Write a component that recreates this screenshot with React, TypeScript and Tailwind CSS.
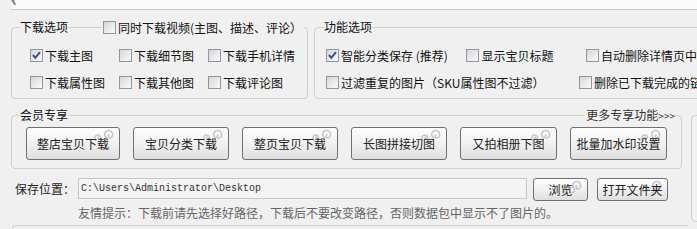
import React from "react";

const FONT = '"Noto Sans CJK SC", "Liberation Sans", sans-serif';

function CheckBox({ checked = false }: { checked?: boolean }) {
  return (
    <span className="relative inline-block w-[13px] h-[13px] shrink-0 border border-[#8f97a3] bg-gradient-to-br from-[#d6d6d6] to-[#fbfbfb]">
      {checked && (
        <svg className="absolute left-0 top-0" width="11" height="11" viewBox="0 0 11 11">
          <path d="M2 5 L4.3 7.8 L9 2.2" stroke="#3d4b8c" strokeWidth="2" fill="none" />
        </svg>
      )}
    </span>
  );
}

function Check({ label, checked = false, className = "" }: { label: string; checked?: boolean; className?: string }) {
  return (
    <div className={"flex items-center gap-[2px] h-[13px] whitespace-nowrap " + className}>
      <CheckBox checked={checked} />
      <span className="text-[12px] leading-[14px] text-[#111]">{label}</span>
    </div>
  );
}

function Swirl() {
  return (
    <svg className="absolute top-[1px] right-[2px]" width="24" height="14" viewBox="0 0 24 14">
      <path d="M3 12 C1 10 1.5 6 5 6 C8 6 8 10 6 10 C4.5 10 4.5 8 6 8" stroke="#c6c6c6" strokeWidth="1.5" fill="none" />
      <path d="M10 13 C13.5 13 14.5 9.5 12.5 7.5 C10.5 5.5 12 1 16 1.5 C20.5 2 21 9 16.5 9 C14.5 9 14.5 6 16.5 6" stroke="#c6c6c6" strokeWidth="1.5" fill="none" />
    </svg>
  );
}

function XButton({ label, className = "" }: { label: string; className?: string }) {
  return (
    <div
      className={
        "relative flex items-center justify-center shrink-0 border border-[#707070] rounded-[3px] bg-gradient-to-b from-[#fdfdfd] via-[#f1f1f1] to-[#dedede] text-[12px] text-[#222] whitespace-nowrap " +
        className
      }
    >
      <Swirl />
      <span className="relative">{label}</span>
    </div>
  );
}

export default function App() {
  return (
    <div className="relative w-[697px] h-[229px] overflow-hidden bg-[#f0f0f0]" style={{ fontFamily: FONT }}>
      {/* top strip */}
      <div className="relative ml-[11px] h-[10px] bg-[#fafafa] border-b border-[#cdc9b6]">
        <svg className="absolute left-0 top-0" width="6" height="6" viewBox="0 0 6 6">
          <polygon points="0,0 3,0 5,5 3,5" fill="#8a8a8a" />
        </svg>
      </div>

      {/* option boxes */}
      <div className="flex mt-[17px] w-[900px]">
        <div className="relative ml-[11px] w-[297px] h-[72px] shrink-0 border border-[#d0d0c6] rounded-[4px]">
          <div className="absolute left-[8px] top-[-8px] h-[14px] bg-[#f0f0f0] text-[12px] leading-[14px] text-[#111]">下载选项</div>
          <div className="absolute left-[90px] top-[-7px] bg-[#f0f0f0] pl-[1px] pr-[2px]">
            <Check label="同时下载视频(主图、描述、评论）" />
          </div>
          <div className="grid grid-cols-[89px_89px_auto] gap-y-[14px] pl-[18px] pt-[21px]">
            <Check label="下载主图" checked />
            <Check label="下载细节图" />
            <Check label="下载手机详情" />
            <Check label="下载属性图" />
            <Check label="下载其他图" />
            <Check label="下载评论图" />
          </div>
        </div>

        <div className="relative ml-[6px] w-[420px] h-[72px] shrink-0 border border-[#d0d0c6] rounded-[4px]">
          <div className="absolute left-[9px] top-[-8px] h-[14px] bg-[#f0f0f0] text-[12px] leading-[14px] text-[#111]">功能选项</div>
          <div className="flex flex-col gap-y-[14px] pl-[11px] pt-[21px]">
            <div className="flex">
              <Check label="智能分类保存 (推荐)" checked className="w-[141px]" />
              <Check label="显示宝贝标题" className="w-[120px]" />
              <Check label="自动删除详情页中的图片" />
            </div>
            <div className="flex">
              <Check label="过滤重复的图片（SKU属性图不过滤）" className="w-[253px]" />
              <Check label="删除已下载完成的链接" />
            </div>
          </div>
        </div>
      </div>

      {/* lower area */}
      <div className="flex mt-[16px]">
        <div className="w-[682px] shrink-0">
          <div className="relative ml-[11px] w-[671px] h-[54px] border border-[#d0d0c6] rounded-[4px]">
            <div className="absolute left-[8px] top-[-8px] h-[14px] bg-[#f0f0f0] text-[12px] leading-[14px] text-[#111]">会员专享</div>
            <div className="absolute right-[6px] top-[-8px] h-[14px] bg-[#f0f0f0] pl-[2px] text-[12px] leading-[14px] text-[#333]">
              更多专享功能<span className="text-[10px]">&gt;&gt;&gt;</span>
            </div>
            <div className="flex gap-[13px] pl-[14px] pt-[11px]">
              <XButton label="整店宝贝下载" className="w-[94px] h-[33px]" />
              <XButton label="宝贝分类下载" className="w-[96px] h-[33px]" />
              <XButton label="整页宝贝下载" className="w-[96px] h-[33px]" />
              <XButton label="长图拼接切图" className="w-[96px] h-[33px]" />
              <XButton label="又拍相册下图" className="w-[97px] h-[33px]" />
              <XButton label="批量加水印设置" className="w-[97px] h-[33px]" />
            </div>
          </div>

          <div className="flex items-start mt-[9px]">
            <div className="ml-[15px] w-[63px] h-[21px] flex items-center text-[12px] text-[#222] whitespace-nowrap">保存位置：</div>
            <div
              className="w-[449px] h-[21px] border border-[#c6c6c6] bg-[#f4f4f4] flex items-center pl-[2px] text-[10px] text-[#333]"
              style={{ fontFamily: '"Liberation Mono", monospace' }}
            >
              C:\Users\Administrator\Desktop
            </div>
            <XButton label="浏览" className="ml-[6px] w-[55px] h-[23px]" />
            <XButton label="打开文件夹" className="ml-[9px] w-[71px] h-[23px]" />
          </div>

          <div className="ml-[78px] mt-[5px] text-[12px] leading-[14px] text-[#666] whitespace-nowrap">
            友情提示：下载前请先选择好路径，下载后不要改变路径，否则数据包中显示不了图片的。
          </div>

          <div className="ml-[12px] mt-[5px] w-[676px] h-[20px] border-t border-l border-[#d0d0c6] rounded-tl-[4px]"></div>
        </div>
        <div className="ml-[9px] w-[30px] h-[107px] shrink-0 border border-[#d0d0c6] rounded-[4px]"></div>
      </div>
    </div>
  );
}
